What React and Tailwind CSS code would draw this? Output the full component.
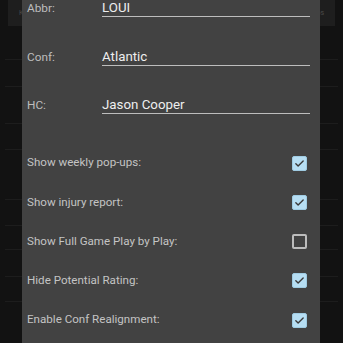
import React from "react";

function Check({ checked }) {
  if (checked) {
    return (
      <div className="w-[15px] h-[15px] rounded-[2px] bg-[#b6def3] border border-[#9fcbe2] flex items-center justify-center">
        <svg width="11" height="11" viewBox="0 0 24 24" fill="none">
          <path d="M4 12.5l5 5L20 6.5" stroke="#3a3a3a" strokeWidth="3" strokeLinecap="round" strokeLinejoin="round" />
        </svg>
      </div>
    );
  }
  return <div className="w-[15px] h-[15px] rounded-[2px] border-2 border-[#bcbcbc]" />;
}

function Field({ label, value }) {
  return (
    <div className="flex h-[17px] items-end">
      <div className="w-[75px] text-[#bdbdbd] text-[11.8px] leading-[16px] pb-px">{label}</div>
      <div className="flex-1 h-[17px] border-b border-[#bdbdbd] text-[#eeeeee] text-[13.3px] leading-[16px]">{value}</div>
    </div>
  );
}

function Row({ label, checked }) {
  return (
    <div className="h-[39.25px] flex items-center justify-between">
      <span className="text-[#c4c4c4] text-[11.6px]">{label}</span>
      <Check checked={checked} />
    </div>
  );
}

export default function App() {
  const lines = [34, 27, 37, 26, 50, 26, 24, 27, 25];
  return (
    <div className="relative w-[343px] h-[343px] overflow-hidden bg-[#121212]" style={{ fontFamily: "Roboto, sans-serif" }}>
      <div className="mx-[8px] h-[26px] bg-[#1e1e1e] flex items-center justify-between px-[11px] text-[7px] text-[#4a4a4a]">
        <span>K</span>
        <span>os</span>
      </div>
      <div className="flex flex-col px-[5px]">
        {lines.map((h, i) => (
          <div key={i} style={{ height: h }} className="flex flex-col justify-end">
            <div className="h-px bg-[#1d1d1d]" />
          </div>
        ))}
      </div>
      <div className="absolute top-0 left-[22px] w-[298px] h-[343px] bg-[#424242] pl-[5px] pr-[13px]">
        <div className="flex flex-col gap-[31.5px] mr-[-3px]">
          <Field label="Abbr:" value="LOUI" />
          <Field label="Conf:" value="Atlantic" />
          <Field label="HC:" value="Jason Cooper" />
        </div>
        <div className="mt-[29.4px] flex flex-col">
          <Row label="Show weekly pop-ups:" checked />
          <Row label="Show injury report:" checked />
          <Row label="Show Full Game Play by Play:" checked={false} />
          <Row label="Hide Potential Rating:" checked />
          <Row label="Enable Conf Realignment:" checked />
        </div>
      </div>
    </div>
  );
}
